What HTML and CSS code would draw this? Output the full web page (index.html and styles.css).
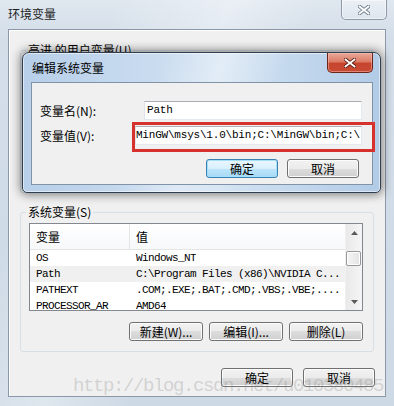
FILE: index.html
```html
<!DOCTYPE html>
<html lang="zh-CN">
<head>
<meta charset="utf-8">
<title>环境变量</title>
<link rel="stylesheet" href="styles.css">
</head>
<body>
<div class="window">
  <div class="titlebar">
    <span class="title">环境变量</span>
    <span class="close close-inactive">
      <svg width="12" height="10" viewBox="0 0 12 10"><path d="M1.5 1.5 L10.5 8.5 M10.5 1.5 L1.5 8.5" class="x-outline-gray"/><path d="M1.5 1.5 L10.5 8.5 M10.5 1.5 L1.5 8.5" class="x-fill"/></svg>
    </span>
  </div>
  <div class="client">
    <fieldset class="group group-user">
      <legend>高进 的用户变量(U)</legend>
      <div class="placeholder"></div>
    </fieldset>
    <fieldset class="group group-sys">
      <legend>系统变量(S)</legend>
      <div class="list">
        <div class="list-body">
          <div class="list-head"><div class="col1">变量</div><div class="col2">值</div></div>
          <div class="row"><div class="col1">OS</div><div class="col2">Windows_NT</div></div>
          <div class="row sel"><div class="col1">Path</div><div class="col2">C:\Program Files (x86)\NVIDIA C...</div></div>
          <div class="row"><div class="col1">PATHEXT</div><div class="col2">.COM;.EXE;.BAT;.CMD;.VBS;.VBE;....</div></div>
          <div class="row"><div class="col1">PROCESSOR_AR</div><div class="col2">AMD64</div></div>
        </div>
        <div class="scrollbar">
          <div class="sb-btn"><svg width="7" height="4" viewBox="0 0 7 4"><path d="M0 4 L3.5 0 L7 4 Z" class="arrow"/></svg></div>
          <div class="sb-thumb"></div>
          <div class="sb-btn sb-down"><svg width="7" height="4" viewBox="0 0 7 4"><path d="M0 0 L7 0 L3.5 4 Z" class="arrow"/></svg></div>
        </div>
      </div>
      <div class="btn-row sys-btns">
        <button class="btn w74">新建(W)...</button>
        <button class="btn w74">编辑(I)...</button>
        <button class="btn w74">删除(L)</button>
      </div>
    </fieldset>
    <div class="btn-row bottom-btns">
      <button class="btn w72">确定</button>
      <button class="btn w72">取消</button>
    </div>
  </div>
  <div class="watermark">http://blog.csdn.net/u010380485</div>

  <div class="dialog">
    <div class="dlg-titlebar">
      <span class="dlg-title">编辑系统变量</span>
      <span class="close close-red">
        <svg width="12" height="10" viewBox="0 0 12 10"><path d="M1.5 1.5 L10.5 8.5 M10.5 1.5 L1.5 8.5" class="x-outline-red"/><path d="M1.5 1.5 L10.5 8.5 M10.5 1.5 L1.5 8.5" class="x-fill"/></svg>
      </span>
    </div>
    <div class="dlg-client">
      <div class="field">
        <span class="label">变量名(N):</span>
        <div class="input input-name"><span class="mono">Path</span></div>
      </div>
      <div class="field field-value">
        <span class="label label-value">变量值(V):</span>
        <div class="input input-value"><span class="mono">.MinGW\msys\1.0\bin;C:\MinGW\bin;C:\</span></div>
      </div>
      <div class="btn-row dlg-btns">
        <button class="btn btn-default w72">确定</button>
        <button class="btn w72">取消</button>
      </div>
    </div>
    <div class="highlight-box"></div>
  </div>
</div>
</body>
</html>
```

FILE: styles.css
```css
* { box-sizing: border-box; }

html, body {
  margin: 0;
  padding: 0;
}

body {
  width: 394px;
  height: 406px;
  overflow: hidden;
  font-family: "Noto Sans CJK SC", "Noto Sans", sans-serif;
  font-size: 12px;
  color: #000;
}

.window {
  position: relative;
  width: 394px;
  height: 406px;
  padding: 0 8px;
  background:
    linear-gradient(115deg, rgba(255,255,255,0) 20%, rgba(255,255,255,0.35) 40%, rgba(255,255,255,0) 55%),
    linear-gradient(to bottom, #dfe7ef 0, #d3dee9 40px, #cdd9e5 100%);
}

.titlebar {
  height: 29px;
  display: flex;
  justify-content: space-between;
  align-items: flex-start;
}

.title {
  line-height: 28px;
  font-size: 12px;
  color: #1e1e1e;
}

.close {
  width: 46px;
  height: 20px;
  display: flex;
  align-items: center;
  justify-content: center;
  border-radius: 0 0 5px 5px;
}

.close-inactive {
  margin-right: -1px;
  border: 1px solid #8e9aa7;
  border-top: none;
  background: linear-gradient(to bottom, rgba(255,255,255,0.35), rgba(255,255,255,0.1));
  box-shadow: inset 0 0 0 1px rgba(255,255,255,0.5);
}

.close-red {
  margin-right: 7px;
  border: 1px solid #6b2419;
  border-top: none;
  background: linear-gradient(to bottom, #e9a898 0%, #dc7d68 45%, #c7452f 55%, #c84a33 100%);
  box-shadow: inset 0 0 0 1px rgba(255,200,190,0.45);
}

.x-outline-gray { stroke: #6e7c8a; stroke-width: 3.6; stroke-linecap: square; fill: none; }
.x-outline-red { stroke: #5e1c12; stroke-width: 3.6; stroke-linecap: square; fill: none; }
.x-fill { stroke: #ffffff; stroke-width: 1.8; stroke-linecap: square; fill: none; }

.client {
  height: 368px;
  border: 1px solid #8a98a7;
  background: #f0f0f0;
  padding: 13px 11px 0 11px;
  box-shadow: inset 1px 1px 0 #ffffff;
}

.group {
  margin: 0;
  min-width: 0;
  border: 1px solid #d5dfe5;
  border-radius: 3px;
  padding: 4px 10px 10px 8px;
}

.group legend {
  padding: 0 2px;
  margin-left: -3px;
  line-height: 14px;
  font-size: 12px;
}

.group-user {
  margin-bottom: 12px;
}

.placeholder {
  height: 121px;
}

.list {
  height: 88px;
  border: 1px solid #828790;
  background: #ffffff;
  display: flex;
}

.list-body {
  flex: 1;
  min-width: 0;
  overflow: hidden;
}

.list-head {
  height: 26px;
  display: flex;
  border-bottom: 1px solid #e5e5e5;
  background: linear-gradient(to bottom, #ffffff, #f7f8fa);
  line-height: 25px;
}

.list-head .col1 {
  border-right: 1px solid #e5e5e5;
}

.col1 {
  width: 100px;
  flex: none;
  padding-left: 6px;
  white-space: nowrap;
  overflow: hidden;
}

.col2 {
  padding-left: 6px;
  white-space: nowrap;
  overflow: hidden;
}

.row {
  display: flex;
  height: 16px;
  line-height: 16px;
  font-family: "Liberation Mono", monospace;
  font-size: 11px;
  letter-spacing: -0.6px;
}

.row.sel {
  background: #f0f0f0;
}

.scrollbar {
  width: 17px;
  flex: none;
  display: flex;
  flex-direction: column;
  background: linear-gradient(to right, #e9e9e9, #f5f5f5);
  border-left: 1px solid #f0f0f0;
}

.sb-btn {
  height: 17px;
  display: flex;
  align-items: center;
  justify-content: center;
}

.sb-down {
  margin-top: auto;
}

.arrow { fill: #5a5a5a; }

.sb-thumb {
  margin: 10px 1px 0 0;
  height: 15px;
  border: 1px solid #979797;
  border-radius: 2px;
  background: linear-gradient(to right, #f5f5f5, #e3e3e3);
  box-shadow: inset 0 0 0 1px #ffffff;
}

.btn-row {
  display: flex;
  justify-content: flex-end;
}

.sys-btns {
  margin-top: 11px;
  gap: 6px;
}

.bottom-btns {
  margin-top: 16px;
  gap: 10px;
  margin-right: -1px;
}

.btn {
  height: 19px;
  padding: 0;
  font-family: "Noto Sans CJK SC", "Noto Sans", sans-serif;
  font-size: 12px;
  line-height: 17px;
  color: #000;
  border: 1px solid #707070;
  border-radius: 3px;
  background: linear-gradient(to bottom, #f2f2f2 0%, #ebebeb 50%, #dddddd 50%, #cfcfcf 100%);
  box-shadow: inset 0 0 0 1px #fcfcfc;
}

.w74 { width: 74px; }
.w72 { width: 72px; }

.btn-default {
  border-color: #3c7fb1;
  background: linear-gradient(to bottom, #eaf6fd 0%, #d9f0fc 50%, #bee6fd 50%, #a7d9f5 100%);
  box-shadow: inset 0 0 0 1px #a5e0fb;
}

.watermark {
  position: absolute;
  left: 73px;
  top: 376px;
  font-family: "Liberation Mono", monospace;
  font-size: 19px;
  line-height: 20px;
  letter-spacing: -1.4px;
  color: rgba(130, 130, 130, 0.28);
  white-space: nowrap;
  pointer-events: none;
}

.dialog {
  position: absolute;
  left: 22px;
  top: 52px;
  width: 359px;
  height: 141px;
  border: 1px solid #2f3e4f;
  border-radius: 7px 7px 5px 5px;
  background:
    linear-gradient(110deg, rgba(255,255,255,0) 35%, rgba(255,255,255,0.35) 50%, rgba(255,255,255,0) 65%),
    linear-gradient(to right, #b7cfe9 0%, #c6d9ee 30%, #d3e3f2 55%, #bdd3eb 85%, #b2cbe6 100%);
  box-shadow: 0 0 10px 2px rgba(0,0,0,0.45), inset 0 0 0 1px rgba(255,255,255,0.55);
  display: flex;
  flex-direction: column;
}

.dlg-titlebar {
  height: 29px;
  display: flex;
  justify-content: space-between;
  align-items: flex-start;
  padding-left: 9px;
}

.dlg-title {
  line-height: 29px;
  color: #000;
}

.dlg-client {
  flex: 1;
  margin: 0 7px 7px 8px;
  border: 1px solid #8193a6;
  background: #f0f0f0;
  padding: 18px 10px 6px 8px;
}

.field {
  display: flex;
  align-items: center;
  height: 19px;
}

.field-value {
  margin-top: 6px;
}

.label {
  width: 104px;
  flex: none;
  line-height: 14px;
}

.label-value {
  width: 95px;
}

.input {
  height: 19px;
  background: #ffffff;
  border: 1px solid;
  border-color: #abadb3 #e3e9ef #e3e9ef #e2e3ea;
  display: flex;
  align-items: center;
  overflow: hidden;
  white-space: nowrap;
}

.input-name {
  width: 218px;
  padding-left: 2px;
}

.input-value {
  width: 227px;
  justify-content: flex-end;
  padding-right: 1px;
}

.mono {
  font-family: "Liberation Mono", monospace;
  font-size: 11px;
  letter-spacing: -0.2px;
  line-height: 17px;
  flex: none;
}

.dlg-btns {
  margin-top: 14px;
  gap: 9px;
  margin-right: 3px;
}

.highlight-box {
  position: absolute;
  left: 109px;
  top: 69px;
  width: 243px;
  height: 30px;
  border: 3px solid #d6312d;
}
```
